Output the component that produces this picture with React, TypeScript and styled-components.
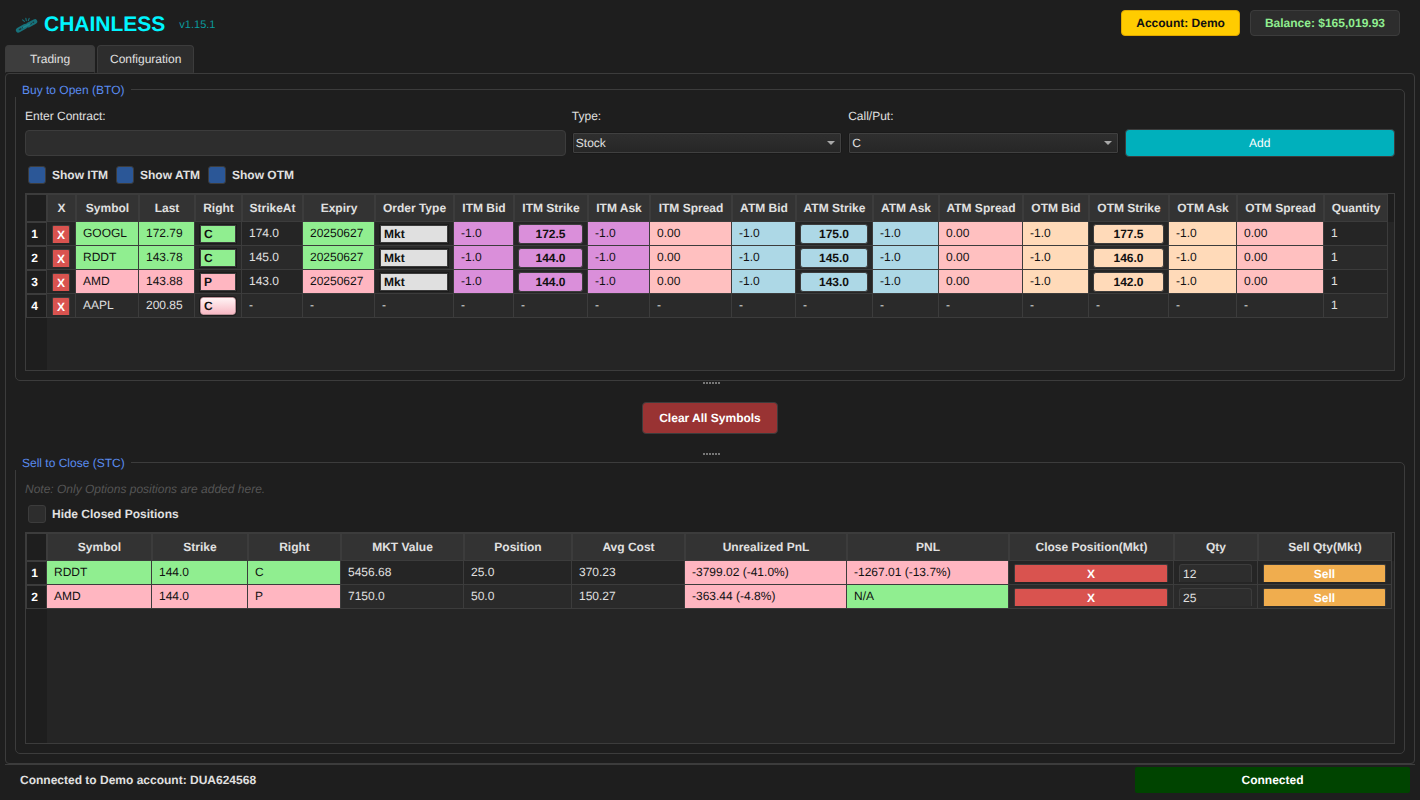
import React, { useState } from "react";
import styled, { createGlobalStyle } from "styled-components";

const c = {
  page: "#1e1e1e",
  field: "#2d2d2d",
  line: "#3c3c3c",
  text: "#e0e0e0",
  green: "#90ee90",
  pink: "#ffb6c1",
  rose: "#ffc0c0",
  plum: "#da8fda",
  sky: "#add8e6",
  peach: "#ffdab9",
  red: "#d9534f",
  orange: "#f0ad4e",
};

const GlobalStyle = createGlobalStyle`
  * { box-sizing: border-box; }
  body { margin: 0; background: ${c.page}; text-rendering: geometricPrecision; }
  body, button, input, select {
    font-family: "Liberation Sans", Arial, sans-serif;
    font-size: 12px;
    line-height: 14px;
    color: ${c.text};
    text-rendering: geometricPrecision;
  }
`;

const Page = styled.div`
  min-height: 100vh;
  display: flex;
  flex-direction: column;
`;

const Header = styled.header`
  display: flex;
  align-items: flex-end;
  justify-content: space-between;
  padding: 10px 20px 9px 15px;
`;

const Brand = styled.div`
  display: flex;
  align-items: center;
  svg { display: block; }
`;

const Title = styled.h1`
  margin: 0 14px 0 6px;
  font-size: 21px;
  line-height: 23px;
  color: #00f5ff;
`;

const Version = styled.span`
  font-size: 11px;
  color: #0b9b9f;
`;

const Pills = styled.div`
  display: flex;
  gap: 10px;
`;

const Pill = styled.div<{ $tone: "gold" | "dark" }>`
  padding: 5px 14px;
  border-radius: 4px;
  font-weight: bold;
  border: 1px solid ${(p) => (p.$tone === "gold" ? "#e0a800" : c.line)};
  background: ${(p) => (p.$tone === "gold" ? "#ffcc00" : c.field)};
  color: ${(p) => (p.$tone === "gold" ? "#111111" : c.green)};
`;

const TabBar = styled.nav`
  display: flex;
  gap: 2px;
  height: 28px;
  padding: 0 5px;
`;

const Tab = styled.button<{ $active: boolean }>`
  min-width: 90px;
  padding: 0 12px;
  border: 1px solid ${c.line};
  border-bottom-color: ${(p) => (p.$active ? c.page : c.field)};
  border-radius: 4px 4px 0 0;
  background: ${(p) => (p.$active ? "#3d3d3d" : c.field)};
`;

const Pane = styled.main`
  flex: 1;
  display: flex;
  flex-direction: column;
  margin: 0 5px;
  padding: 8px 9px 9px;
  border: 1px solid ${c.line};
  border-radius: 4px;
`;

const Group = styled.section<{ $grow?: boolean }>`
  display: flex;
  flex-direction: column;
  flex: ${(p) => (p.$grow ? "1" : "none")};
  min-width: 0;
  margin-top: 7px;
  padding: 0 9px 9px;
  border: 1px solid ${c.line};
  border-radius: 5px;
`;

const Legend = styled.h2`
  align-self: flex-start;
  margin: -8px 0 12px -10px;
  padding: 1px 6px 0 7px;
  font-size: 12px;
  font-weight: normal;
  background: ${c.page};
  color: #5a8cf0;
`;

const Form = styled.form`
  display: grid;
  grid-template-columns: 2fr 1fr 1fr 1fr;
  grid-template-rows: 14px 28px;
  gap: 6px;
  align-items: center;
`;

const AddButton = styled.button`
  grid-column: 4;
  grid-row: 2;
  height: 28px;
  border: 1px solid ${c.line};
  border-radius: 4px;
  background: #00b0bc;
  color: #ffffff;
`;

const ContractInput = styled.input`
  grid-row: 2;
  width: 100%;
  height: 26px;
  padding: 0 6px;
  border: 1px solid ${c.line};
  border-radius: 4px;
  background: ${c.field};
`;

const SelectBox = styled.div`
  grid-row: 2;
  position: relative;
  svg {
    position: absolute;
    right: 7px;
    top: 9px;
    pointer-events: none;
  }
`;

const Select = styled.select`
  appearance: none;
  display: block;
  width: 100%;
  height: 22px;
  padding: 0 20px 0 3px;
  border: 1px solid ${c.line};
  border-radius: 2px;
  outline: 1px solid #191919;
  outline-offset: -1px;
  box-shadow: inset 0 0 0 1px #404040;
  background: linear-gradient(#2f2f2f, #262626);
`;

const Checks = styled.div`
  display: flex;
  gap: 8px;
  padding: 9px 3px;
`;

const CheckLabel = styled.label`
  display: flex;
  align-items: center;
  gap: 6px;
  font-weight: bold;
`;

const CheckInput = styled.input`
  appearance: none;
  width: 18px;
  height: 18px;
  margin: 0;
  border: 1px solid ${c.line};
  border-radius: 3px;
  background: ${c.field};
  &:checked { background: #2b5797; }
`;

const Note = styled.p`
  margin: 0;
  color: #555555;
  font-style: italic;
`;

const Frame = styled.div<{ $grow?: boolean }>`
  flex: ${(p) => (p.$grow ? "1" : "none")};
  min-height: 178px;
  overflow: hidden;
  border: 1px solid ${c.line};
  background: linear-gradient(to right, ${c.page} 21px, #252525 21px);
`;

const Table = styled.table`
  width: 100%;
  table-layout: fixed;
  border-collapse: separate;
  border-spacing: 0;
  th { padding: 0; }
  thead th { border: 1px solid ${c.line}; height: 28px; background: #333333; white-space: nowrap; }
  thead td { border: 1px solid ${c.line}; background: ${c.page}; }
  thead td:last-child { border: none; }
  tbody tr { height: 24px; background: #252525; }
  tbody tr:nth-child(even) { background: #2a2a2a; }
  tbody th { border: 1px solid ${c.line}; padding: 0 4px 0 0; background: ${c.page}; color: #ffffff; }
`;

const Cell = styled.td<{ $bg?: string }>`
  height: 24px;
  padding: 0 7px 2px;
  border-right: 1px solid ${c.line};
  border-bottom: 1px solid ${c.line};
  white-space: nowrap;
  ${(p) => p.$bg && `background: ${p.$bg}; color: #111111;`}
`;

const ControlCell = styled.td<{ $wide?: boolean }>`
  height: 24px;
  padding: 2px ${(p) => (p.$wide ? "4px" : "5px")} 0;
  vertical-align: top;
  border-right: 1px solid ${c.line};
  border-bottom: 1px solid ${c.line};
`;

const RemoveButton = styled.button`
  display: block;
  width: 18px;
  height: 18px;
  margin-top: 1px;
  padding: 1px 0 0;
  border: 1px solid ${c.line};
  border-bottom: none;
  border-radius: 2px 2px 0 0;
  background: ${c.red};
  color: #ffffff;
  font-weight: bold;
`;

const CellSelect = styled.select<{ $bg: string; $soft?: boolean }>`
  appearance: none;
  display: block;
  width: 100%;
  height: 18px;
  margin-top: 1px;
  padding: 0 3px;
  border: 1px solid ${(p) => (p.$soft ? "#b98f96" : c.line)};
  border-radius: ${(p) => (p.$soft ? "3px" : "0")};
  outline: 1px solid #1b1b1b;
  background: ${(p) => p.$bg};
  color: #111111;
  font-weight: bold;
`;

const StrikeButton = styled.button<{ $bg: string }>`
  display: block;
  width: 100%;
  height: 20px;
  padding: 0;
  border: 1px solid ${c.line};
  border-radius: 3px;
  background: ${(p) => p.$bg};
  color: #111111;
  font-weight: bold;
`;

const TradeButton = styled.button<{ $bg: string }>`
  display: block;
  width: 100%;
  height: 18px;
  margin-top: 1px;
  padding: 1px 0 0;
  border: 1px solid ${c.line};
  border-bottom: none;
  border-radius: 2px 2px 0 0;
  background: ${(p) => p.$bg};
  color: #ffffff;
  font-weight: bold;
`;

const QtyInput = styled.input`
  display: block;
  width: 100%;
  height: 18px;
  margin-top: 1px;
  padding: 1px 3px 0;
  border: 1px solid ${c.line};
  border-bottom: none;
  border-radius: 3px 3px 0 0;
  background: ${c.field};
`;

const Splitter = styled.div`
  display: flex;
  justify-content: center;
  align-items: flex-end;
  gap: 1px;
  height: 3px;
  padding: 0 0 0 3px;
`;

const Dot = styled.i`
  width: 2px;
  height: 2px;
  background: #777777;
`;

const Middle = styled.section`
  display: flex;
  align-items: center;
  justify-content: center;
  height: 68px;
`;

const ClearButton = styled.button`
  height: 32px;
  padding: 0 16px;
  border: 1px solid ${c.line};
  border-radius: 4px;
  background: #993333;
  color: #ffffff;
  font-weight: bold;
`;

const StatusBar = styled.footer`
  display: grid;
  grid-template-columns: 4fr 1fr;
  gap: 15px;
  align-items: center;
  margin: 0 5px;
  padding: 2px 5px 7px 15px;
  border-top: 1px solid ${c.line};
  font-weight: bold;
`;

const Connection = styled.div`
  padding: 6px;
  border-radius: 2px;
  background: #004400;
  color: #ffffff;
  text-align: center;
`;

const ChainLogo = () => (
  <svg width="23" height="20" viewBox="0 0 23 20" fill="none" strokeLinecap="round" aria-hidden="true">
    <path d="M3.4 15.2 10 11.4M13.4 10 19.8 6.6" stroke="#17727b" strokeWidth="5" />
    <path d="M4.4 14.6 8 12.5M14.8 9.3 18.6 7.2" stroke="#1e3a3d" strokeWidth="1.4" strokeDasharray="1.6 2.2" />
    <path d="M8.4 12.3 15 8.8" stroke="#23848d" strokeWidth="1.4" />
    <path d="M7.6 4.8 9.4 6.4M10.8 3.2l.5 2.4M14.2 3.4l-.9 2.2" stroke="#17727b" strokeWidth="1.1" />
  </svg>
);

const Arrow = () => (
  <svg width="8" height="4" viewBox="0 0 8 4" aria-hidden="true">
    <path d="M0 0h8L4 4z" fill="#a8a8a8" />
  </svg>
);

const Grip = () => (
  <Splitter role="separator">
    {[0, 1, 2, 3, 4, 5].map((i) => (
      <Dot key={i} />
    ))}
  </Splitter>
);

type Column = [name: string, width: number];

const orderColumns: Column[] = [
  ["X", 29], ["Symbol", 63], ["Last", 56], ["Right", 47], ["StrikeAt", 61], ["Expiry", 72], ["Order Type", 79],
  ["ITM Bid", 60], ["ITM Strike", 74], ["ITM Ask", 62], ["ITM Spread", 82],
  ["ATM Bid", 64], ["ATM Strike", 77], ["ATM Ask", 66], ["ATM Spread", 84],
  ["OTM Bid", 66], ["OTM Strike", 80], ["OTM Ask", 68], ["OTM Spread", 87], ["Quantity", 64],
];

const positionColumns: Column[] = [
  ["Symbol", 105], ["Strike", 96], ["Right", 93], ["MKT Value", 123], ["Position", 108], ["Avg Cost", 113],
  ["Unrealized PnL", 162], ["PNL", 162], ["Close Position(Mkt)", 165], ["Qty", 84], ["Sell Qty(Mkt)", 134],
];

interface Order {
  symbol: string;
  last: string;
  right: "C" | "P";
  strikeAt: string;
  expiry: string;
  strikes: string[];
  tone?: string;
}

const orders: Order[] = [
  { symbol: "GOOGL", last: "172.79", right: "C", strikeAt: "174.0", expiry: "20250627", strikes: ["172.5", "175.0", "177.5"], tone: c.green },
  { symbol: "RDDT", last: "143.78", right: "C", strikeAt: "145.0", expiry: "20250627", strikes: ["144.0", "145.0", "146.0"], tone: c.green },
  { symbol: "AMD", last: "143.88", right: "P", strikeAt: "143.0", expiry: "20250627", strikes: ["144.0", "143.0", "142.0"], tone: c.pink },
  { symbol: "AAPL", last: "200.85", right: "C", strikeAt: "-", expiry: "-", strikes: [] },
];

const positions = [
  { symbol: "RDDT", right: "C", value: "5456.68", position: "25.0", cost: "370.23", unrealized: "-3799.02 (-41.0%)", pnl: "-1267.01 (-13.7%)", qty: "12", tone: c.green, pnlTone: c.pink },
  { symbol: "AMD", right: "P", value: "7150.0", position: "50.0", cost: "150.27", unrealized: "-363.44 (-4.8%)", pnl: "N/A", qty: "25", tone: c.pink, pnlTone: c.green },
];

const bands = [
  { name: "ITM", bg: c.plum },
  { name: "ATM", bg: c.sky },
  { name: "OTM", bg: c.peach },
];

const TableHead = ({ columns }: { columns: Column[] }) => (
  <>
    <colgroup>
      <col width={21} />
      {columns.map(([name, width]) => (
        <col key={name} width={width} />
      ))}
      <col />
    </colgroup>
    <thead>
      <tr>
        <td />
        {columns.map(([name]) => (
          <th key={name} scope="col">{name}</th>
        ))}
        <td />
      </tr>
    </thead>
  </>
);

const OrderRow = ({ order, index }: { order: Order; index: number }) => (
  <tr>
    <th scope="row">{index}</th>
    <ControlCell>
      <RemoveButton aria-label={`Remove ${order.symbol}`}>X</RemoveButton>
    </ControlCell>
    <Cell $bg={order.tone}>{order.symbol}</Cell>
    <Cell $bg={order.tone}>{order.last}</Cell>
    <ControlCell>
      <CellSelect
        aria-label={`${order.symbol} right`}
        defaultValue={order.right}
        $bg={order.tone ?? "linear-gradient(#fff4f5, #f8b9c4)"}
        $soft={!order.tone}
      >
        <option>C</option>
        <option>P</option>
      </CellSelect>
    </ControlCell>
    <Cell>{order.strikeAt}</Cell>
    <Cell $bg={order.tone}>{order.expiry}</Cell>
    {order.tone ? (
      <ControlCell>
        <CellSelect aria-label={`${order.symbol} order type`} $bg="#e0e0e0">
          <option>Mkt</option>
          <option>Lmt</option>
        </CellSelect>
      </ControlCell>
    ) : (
      <Cell>-</Cell>
    )}
    {bands.map((band, i) =>
      order.tone ? (
        <React.Fragment key={band.name}>
          <Cell $bg={band.bg}>-1.0</Cell>
          <ControlCell $wide>
            <StrikeButton $bg={band.bg}>{order.strikes[i]}</StrikeButton>
          </ControlCell>
          <Cell $bg={band.bg}>-1.0</Cell>
          <Cell $bg={c.rose}>0.00</Cell>
        </React.Fragment>
      ) : (
        <React.Fragment key={band.name}>
          <Cell>-</Cell>
          <Cell>-</Cell>
          <Cell>-</Cell>
          <Cell>-</Cell>
        </React.Fragment>
      )
    )}
    <Cell>1</Cell>
  </tr>
);

const Check = ({ label, checked = false }: { label: string; checked?: boolean }) => (
  <CheckLabel>
    <CheckInput type="checkbox" defaultChecked={checked} />
    {label}
  </CheckLabel>
);

export default function App() {
  const [tab, setTab] = useState("Trading");
  return (
    <Page>
      <GlobalStyle />
      <Header>
        <Brand>
          <ChainLogo />
          <Title>CHAINLESS</Title>
          <Version>v1.15.1</Version>
        </Brand>
        <Pills>
          <Pill $tone="gold">Account: Demo</Pill>
          <Pill $tone="dark">Balance: $165,019.93</Pill>
        </Pills>
      </Header>
      <TabBar>
        {["Trading", "Configuration"].map((name) => (
          <Tab key={name} $active={name === tab} onClick={() => setTab(name)}>{name}</Tab>
        ))}
      </TabBar>
      <Pane>
        <Group aria-labelledby="bto">
          <Legend id="bto">Buy to Open (BTO)</Legend>
          <Form onSubmit={(e) => e.preventDefault()}>
            <label htmlFor="contract">Enter Contract:</label>
            <label htmlFor="type">Type:</label>
            <label htmlFor="side">Call/Put:</label>
            <ContractInput id="contract" />
            <SelectBox>
              <Select id="type"><option>Stock</option><option>Index</option></Select>
              <Arrow />
            </SelectBox>
            <SelectBox>
              <Select id="side"><option>C</option><option>P</option></Select>
              <Arrow />
            </SelectBox>
            <AddButton type="submit">Add</AddButton>
          </Form>
          <Checks>
            <Check label="Show ITM" checked />
            <Check label="Show ATM" checked />
            <Check label="Show OTM" checked />
          </Checks>
          <Frame>
            <Table>
              <TableHead columns={orderColumns} />
              <tbody>
                {orders.map((order, i) => (
                  <OrderRow key={order.symbol} order={order} index={i + 1} />
                ))}
              </tbody>
            </Table>
          </Frame>
        </Group>
        <Grip />
        <Middle>
          <ClearButton>Clear All Symbols</ClearButton>
        </Middle>
        <Grip />
        <Group $grow aria-labelledby="stc">
          <Legend id="stc">Sell to Close (STC)</Legend>
          <Note>Note: Only Options positions are added here.</Note>
          <Checks>
            <Check label="Hide Closed Positions" />
          </Checks>
          <Frame $grow>
            <Table>
              <TableHead columns={positionColumns} />
              <tbody>
                {positions.map((p, i) => (
                  <tr key={p.symbol}>
                    <th scope="row">{i + 1}</th>
                    <Cell $bg={p.tone}>{p.symbol}</Cell>
                    <Cell $bg={p.tone}>144.0</Cell>
                    <Cell $bg={p.tone}>{p.right}</Cell>
                    <Cell>{p.value}</Cell>
                    <Cell>{p.position}</Cell>
                    <Cell>{p.cost}</Cell>
                    <Cell $bg={c.pink}>{p.unrealized}</Cell>
                    <Cell $bg={p.pnlTone}>{p.pnl}</Cell>
                    <ControlCell>
                      <TradeButton $bg={c.red} aria-label={`Close ${p.symbol}`}>X</TradeButton>
                    </ControlCell>
                    <ControlCell>
                      <QtyInput aria-label={`${p.symbol} quantity`} defaultValue={p.qty} />
                    </ControlCell>
                    <ControlCell>
                      <TradeButton $bg={c.orange}>Sell</TradeButton>
                    </ControlCell>
                  </tr>
                ))}
              </tbody>
            </Table>
          </Frame>
        </Group>
      </Pane>
      <StatusBar>
        <span>Connected to Demo account: DUA624568</span>
        <Connection role="status">Connected</Connection>
      </StatusBar>
    </Page>
  );
}
